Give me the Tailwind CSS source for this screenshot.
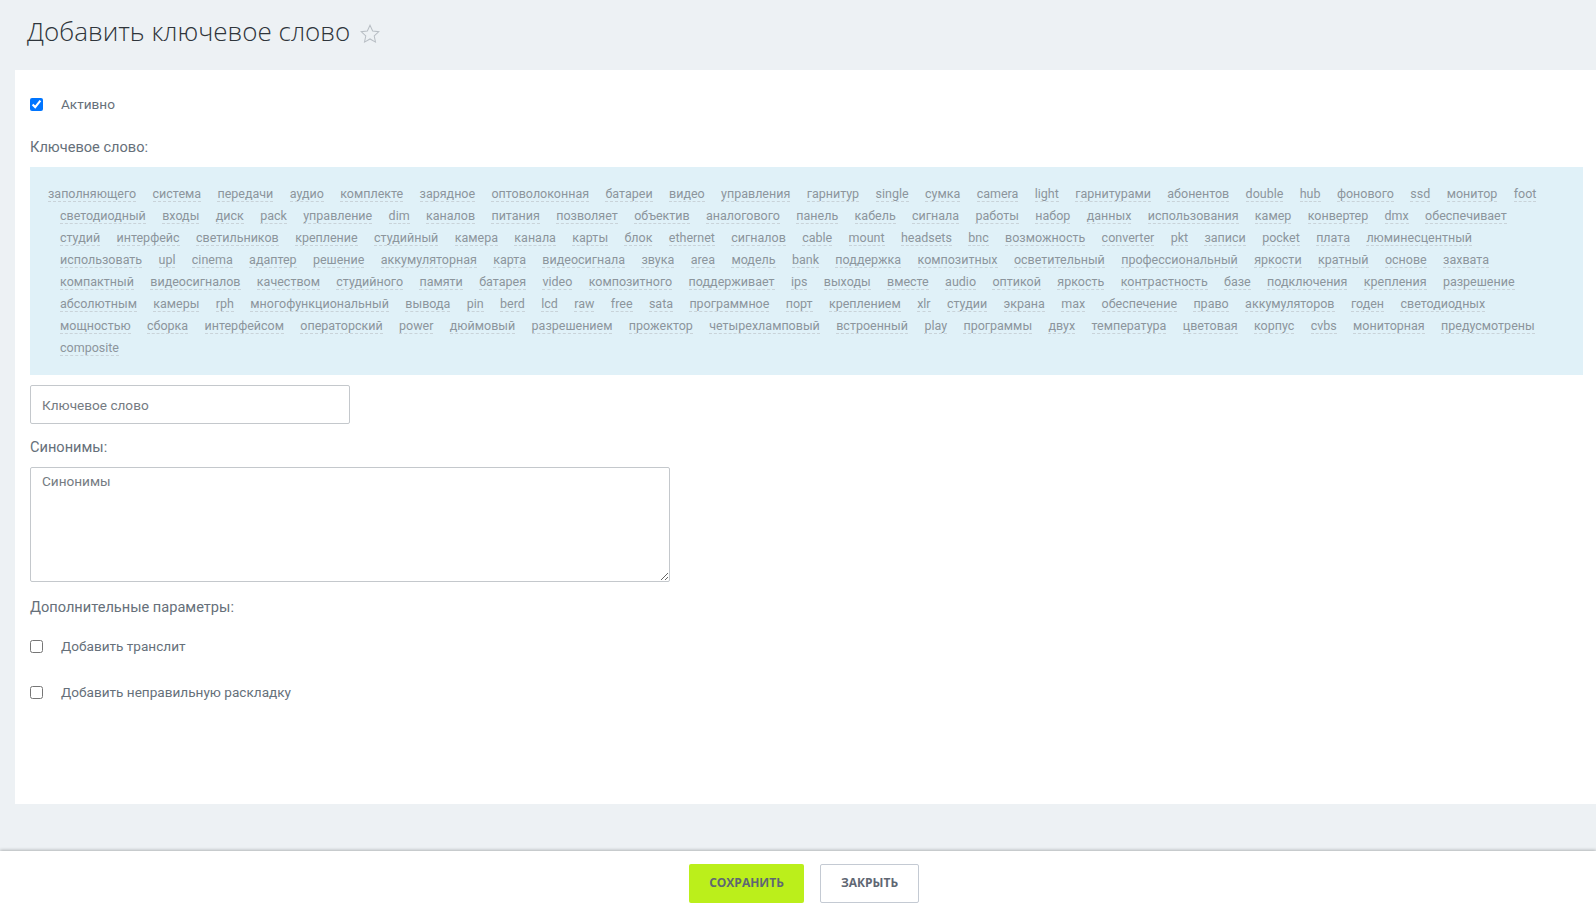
<!DOCTYPE html>
<html lang="ru">
<head>
<meta charset="UTF-8" />
<title>Добавить ключевое слово</title>
<script src="https://cdn.jsdelivr.net/npm/@tailwindcss/browser@4"></script>
</head>
<body class="bg-[#edf1f4] h-screen overflow-hidden flex flex-col font-['Roboto',sans-serif] text-[14.6px] text-[#66707a]">
  <!-- Page title -->
  <div class="h-[70px] shrink-0 flex items-center pl-[27px] pb-[8px] gap-[9px]">
    <h1 class="font-['Open_Sans',sans-serif] font-light text-[26px] text-[#2f353b] leading-none">Добавить ключевое слово</h1>
    <svg class="w-[22px] h-[22px] mt-[5px]" viewBox="0 0 24 24" fill="none" stroke="#b8bec4" stroke-width="1.1"><path d="M12 2.5l2.9 6.2 6.7.8-5 4.6 1.4 6.7-6-3.4-6 3.4 1.4-6.7-5-4.6 6.7-.8z"/></svg>
  </div>

  <!-- Form -->
  <form class="ml-[15px] h-[734px] shrink-0 bg-white pl-[15px] pr-[13px] pt-[26px]">
    <label class="flex items-center h-[16px] gap-[18px] text-[13.6px]">
      <input type="checkbox" checked class="w-[13px] h-[13px] m-0" />
      <span>Активно</span>
    </label>

    <div class="mt-[25px] leading-[20px] h-[20px]">Ключевое слово:</div>
    <div class="mt-[10px] h-[208px] bg-[#e0f1f8] pl-[30px] pr-[19px] pt-[16px] -indent-[12px] text-[12.5px] leading-[22px] text-[#8c959c] [&_a]:border-b [&_a]:border-dashed [&_a]:border-[#c9d3d9] [&_a]:mr-[13.25px]">
      <a>заполняющего</a> <a>система</a> <a>передачи</a> <a>аудио</a> <a>комплекте</a> <a>зарядное</a> <a>оптоволоконная</a> <a>батареи</a> <a>видео</a> <a>управления</a> <a>гарнитур</a> <a>single</a> <a>сумка</a> <a>camera</a> <a>light</a> <a>гарнитурами</a> <a>абонентов</a> <a>double</a> <a>hub</a> <a>фонового</a> <a>ssd</a> <a>монитор</a> <a>foot</a>
      <a>светодиодный</a> <a>входы</a> <a>диск</a> <a>pack</a> <a>управление</a> <a>dim</a> <a>каналов</a> <a>питания</a> <a>позволяет</a> <a>объектив</a> <a>аналогового</a> <a>панель</a> <a>кабель</a> <a>сигнала</a> <a>работы</a> <a>набор</a> <a>данных</a> <a>использования</a> <a>камер</a> <a>конвертер</a> <a>dmx</a> <a>обеспечивает</a>
      <a>студий</a> <a>интерфейс</a> <a>светильников</a> <a>крепление</a> <a>студийный</a> <a>камера</a> <a>канала</a> <a>карты</a> <a>блок</a> <a>ethernet</a> <a>сигналов</a> <a>cable</a> <a>mount</a> <a>headsets</a> <a>bnc</a> <a>возможность</a> <a>converter</a> <a>pkt</a> <a>записи</a> <a>pocket</a> <a>плата</a> <a>люминесцентный</a>
      <a>использовать</a> <a>upl</a> <a>cinema</a> <a>адаптер</a> <a>решение</a> <a>аккумуляторная</a> <a>карта</a> <a>видеосигнала</a> <a>звука</a> <a>area</a> <a>модель</a> <a>bank</a> <a>поддержка</a> <a>композитных</a> <a>осветительный</a> <a>профессиональный</a> <a>яркости</a> <a>кратный</a> <a>основе</a> <a>захвата</a>
      <a>компактный</a> <a>видеосигналов</a> <a>качеством</a> <a>студийного</a> <a>памяти</a> <a>батарея</a> <a>video</a> <a>композитного</a> <a>поддерживает</a> <a>ips</a> <a>выходы</a> <a>вместе</a> <a>audio</a> <a>оптикой</a> <a>яркость</a> <a>контрастность</a> <a>базе</a> <a>подключения</a> <a>крепления</a> <a>разрешение</a>
      <a>абсолютным</a> <a>камеры</a> <a>rph</a> <a>многофункциональный</a> <a>вывода</a> <a>pin</a> <a>berd</a> <a>lcd</a> <a>raw</a> <a>free</a> <a>sata</a> <a>программное</a> <a>порт</a> <a>креплением</a> <a>xlr</a> <a>студии</a> <a>экрана</a> <a>max</a> <a>обеспечение</a> <a>право</a> <a>аккумуляторов</a> <a>годен</a> <a>светодиодных</a>
      <a>мощностью</a> <a>сборка</a> <a>интерфейсом</a> <a>операторский</a> <a>power</a> <a>дюймовый</a> <a>разрешением</a> <a>прожектор</a> <a>четырехламповый</a> <a>встроенный</a> <a>play</a> <a>программы</a> <a>двух</a> <a>температура</a> <a>цветовая</a> <a>корпус</a> <a>cvbs</a> <a>мониторная</a> <a>предусмотрены</a>
      <a>composite</a>
    </div>

    <input type="text" placeholder="Ключевое слово" class="block mt-[10px] w-[320px] h-[39px] px-[11px] bg-white border border-[#c4c8cc] rounded-[2px] text-[13.6px] placeholder:text-[#757b82]" />

    <div class="mt-[13px] leading-[20px] h-[20px]">Синонимы:</div>
    <textarea placeholder="Синонимы" class="block mt-[10px] w-[640px] h-[115px] px-[11px] py-[3px] bg-white border border-[#c4c8cc] rounded-[2px] text-[13.6px] placeholder:text-[#757b82]"></textarea>

    <div class="mt-[15px] leading-[20px] h-[20px]">Дополнительные параметры:</div>
    <label class="flex items-center h-[16px] gap-[18px] mt-[21px] text-[13.6px]">
      <input type="checkbox" class="w-[13px] h-[13px] m-0" />
      <span>Добавить транслит</span>
    </label>
    <label class="flex items-center h-[16px] gap-[18px] mt-[30px] text-[13.6px]">
      <input type="checkbox" class="w-[13px] h-[13px] m-0" />
      <span>Добавить неправильную раскладку</span>
    </label>
  </form>

  <!-- Footer -->
  <div class="mt-auto h-[63px] shrink-0 bg-white flex items-center justify-center gap-[16px] shadow-[0_-1px_3px_rgba(0,0,0,0.25)] pl-[12px] pt-[1px] font-['Open_Sans',sans-serif] font-bold text-[12px] uppercase text-[#5f6773]">
    <button type="button" class="w-[115px] h-[39px] bg-[#bbef1b] rounded-[2px] uppercase">Сохранить</button>
    <button type="button" class="w-[99px] h-[39px] bg-white border border-[#c4cad3] rounded-[2px] uppercase">Закрыть</button>
  </div>
</body>
</html>
